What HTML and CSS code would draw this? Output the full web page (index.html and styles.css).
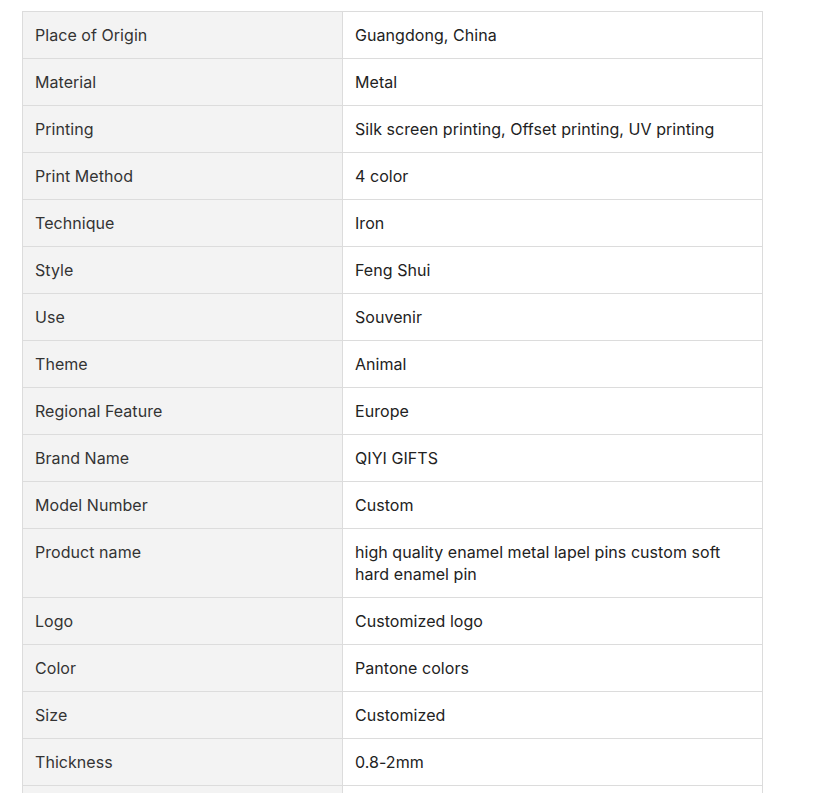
FILE: index.html
```html
<!DOCTYPE html>
<html>
<head>
<meta charset="utf-8">
<link rel="stylesheet" href="styles.css">
</head>
<body>
<table class="spec">
<tbody>
<tr><td class="k">Place of Origin</td><td class="v">Guangdong, China</td></tr>
<tr><td class="k">Material</td><td class="v">Metal</td></tr>
<tr><td class="k">Printing</td><td class="v">Silk screen printing, Offset printing, UV printing</td></tr>
<tr><td class="k">Print Method</td><td class="v">4 color</td></tr>
<tr><td class="k">Technique</td><td class="v">Iron</td></tr>
<tr><td class="k">Style</td><td class="v">Feng Shui</td></tr>
<tr><td class="k">Use</td><td class="v">Souvenir</td></tr>
<tr><td class="k">Theme</td><td class="v">Animal</td></tr>
<tr><td class="k">Regional Feature</td><td class="v">Europe</td></tr>
<tr><td class="k">Brand Name</td><td class="v">QIYI GIFTS</td></tr>
<tr><td class="k">Model Number</td><td class="v">Custom</td></tr>
<tr><td class="k">Product name</td><td class="v">high quality enamel metal lapel pins custom soft hard enamel pin</td></tr>
<tr><td class="k">Logo</td><td class="v">Customized logo</td></tr>
<tr><td class="k">Color</td><td class="v">Pantone colors</td></tr>
<tr><td class="k">Size</td><td class="v">Customized</td></tr>
<tr><td class="k">Thickness</td><td class="v">0.8-2mm</td></tr>
<tr class="empty"><td class="k"></td><td class="v"></td></tr>
</tbody>
</table>
</body>
</html>
```
FILE: styles.css
```css
html, body {
  margin: 0;
  padding: 0;
  background: #fff;
}
body {
  font-family: Inter, "Noto Sans", sans-serif;
  font-size: 16px;
  line-height: 22px;
  letter-spacing: 0.05px;
}
.spec {
  margin: 11px 0 0 22px;
  width: 741px;
  border-collapse: collapse;
  table-layout: fixed;
}
.spec td {
  border: 1px solid #dcdcdc;
  padding: 12px 12px;
  vertical-align: top;
}
.spec .k {
  width: 295px;
  background: #f3f3f3;
  color: #333;
}
.spec .v {
  background: #fff;
  color: #222;
  padding-right: 30px;
}
.spec .empty td {
  height: 22px;
}
```
